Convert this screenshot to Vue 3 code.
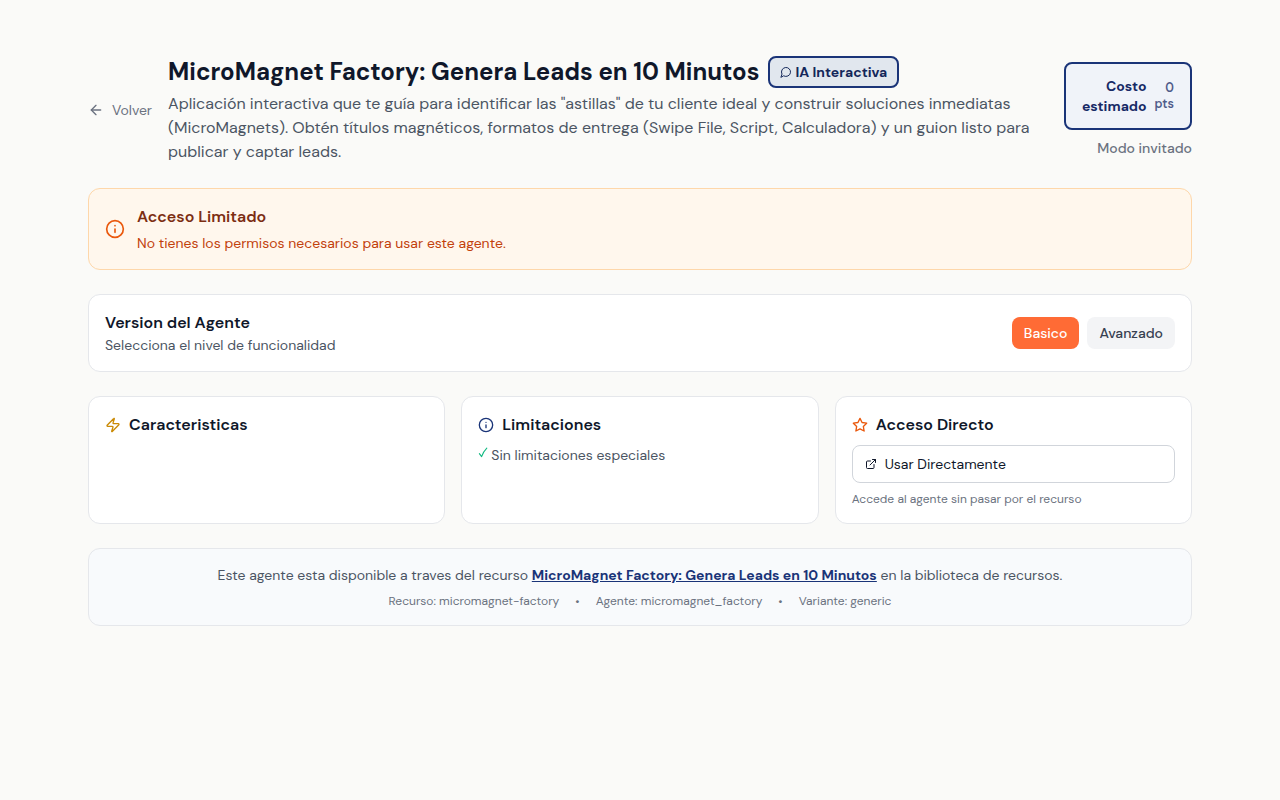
<template>
  <div class="agent-page">
    <div class="container">
      <header class="header">
        <button class="back-btn">
          <svg class="icon-16" viewBox="0 0 24 24">
            <path d="m12 19-7-7 7-7"/>
            <path d="M19 12H5"/>
          </svg>
          <span>Volver</span>
        </button>

        <div class="header-main">
          <div class="title-row">
            <h1>{{ agent.name }}</h1>
            <span class="badge">
              <svg class="icon-12" viewBox="0 0 24 24">
                <path d="M7.9 20A9 9 0 1 0 4 16.1L2 22Z"/>
              </svg>
              IA Interactiva
            </span>
          </div>
          <p class="description">{{ agent.description }}</p>
        </div>

        <div class="header-side">
          <div class="cost-box">
            <span class="cost-label">Costo<br>estimado</span>
            <span class="cost-value">{{ agent.cost }}<br>pts</span>
          </div>
          <span class="guest">Modo invitado</span>
        </div>
      </header>

      <section class="alert">
        <svg class="icon-20" viewBox="0 0 24 24">
          <circle cx="12" cy="12" r="10"/>
          <path d="M12 16v-4"/>
          <path d="M12 8h.01"/>
        </svg>
        <div>
          <h3>Acceso Limitado</h3>
          <p>No tienes los permisos necesarios para usar este agente.</p>
        </div>
      </section>

      <section class="card version">
        <div>
          <h3>Version del Agente</h3>
          <p>Selecciona el nivel de funcionalidad</p>
        </div>
        <div class="version-options">
          <button
            v-for="v in versions"
            :key="v.id"
            class="version-btn"
            :class="{ active: selected === v.id }"
            @click="selected = v.id"
          >{{ v.label }}</button>
        </div>
      </section>

      <div class="grid">
        <section class="card">
          <div class="card-title features">
            <svg class="icon-16" viewBox="0 0 24 24">
              <path d="M4 14a1 1 0 0 1-.78-1.63l9.9-10.2a.5.5 0 0 1 .86.46l-1.92 6.02A1 1 0 0 0 13 10h7a1 1 0 0 1 .78 1.63l-9.9 10.2a.5.5 0 0 1-.86-.46l1.92-6.02A1 1 0 0 0 11 14z"/>
            </svg>
            <h3>Caracteristicas</h3>
          </div>
        </section>

        <section class="card">
          <div class="card-title limits">
            <svg class="icon-16" viewBox="0 0 24 24">
              <circle cx="12" cy="12" r="10"/>
              <path d="M12 16v-4"/>
              <path d="M12 8h.01"/>
            </svg>
            <h3>Limitaciones</h3>
          </div>
          <div class="limit-item">
            <svg class="check" viewBox="0 0 10 12">
              <path d="M1.4 6.6 3.6 9.6C4.8 6.4 6.4 3.6 8.8 1.2"/>
            </svg>
            <span>Sin limitaciones especiales</span>
          </div>
        </section>

        <section class="card">
          <div class="card-title direct">
            <svg class="icon-16" viewBox="0 0 24 24">
              <path d="M12 2l3.09 6.26L22 9.27l-5 4.87 1.18 6.88L12 17.77l-6.18 3.25L7 14.14 2 9.27l6.91-1.01L12 2z"/>
            </svg>
            <h3>Acceso Directo</h3>
          </div>
          <button class="direct-btn">
            <svg class="icon-12" viewBox="0 0 24 24">
              <path d="M15 3h6v6"/>
              <path d="M10 14 21 3"/>
              <path d="M18 13v6a2 2 0 0 1-2 2H5a2 2 0 0 1-2-2V8a2 2 0 0 1 2-2h6"/>
            </svg>
            <span>Usar Directamente</span>
          </button>
          <p class="hint">Accede al agente sin pasar por el recurso</p>
        </section>
      </div>

      <footer class="resource">
        <p>
          Este agente esta disponible a traves del recurso
          <a>{{ agent.name }}</a>
          en la biblioteca de recursos.
        </p>
        <div class="meta">
          <span>Recurso: {{ agent.resource }}</span>
          <span>•</span>
          <span>Agente: {{ agent.id }}</span>
          <span>•</span>
          <span>Variante: {{ agent.variant }}</span>
        </div>
      </footer>
    </div>
  </div>
</template>

<script setup>
import { ref } from 'vue'

const agent = {
  id: 'micromagnet_factory',
  name: 'MicroMagnet Factory: Genera Leads en 10 Minutos',
  description: 'Aplicación interactiva que te guía para identificar las "astillas" de tu cliente ideal y construir soluciones inmediatas (MicroMagnets). Obtén títulos magnéticos, formatos de entrega (Swipe File, Script, Calculadora) y un guion listo para publicar y captar leads.',
  resource: 'micromagnet-factory',
  variant: 'generic',
  cost: 0
}

const versions = [
  { id: 'basic', label: 'Basico' },
  { id: 'advanced', label: 'Avanzado' }
]

const selected = ref('basic')
</script>

<style>
body {
  margin: 0;
  background: #fafaf8;
}
</style>

<style scoped>
.agent-page {
  min-height: 100vh;
  box-sizing: border-box;
  padding: 56px 24px;
  background: #fafaf8;
  color: #0f172a;
  font-family: "DM Sans", Inter, "Open Sans", sans-serif;
  font-size: 14px;
  line-height: 20px;
}

.container {
  max-width: 1104px;
  margin: 0 auto;
  display: flex;
  flex-direction: column;
  gap: 24px;
}

h1,
h3,
p {
  margin: 0;
}

button {
  font: inherit;
  color: inherit;
  border: none;
  background: none;
  padding: 0;
  cursor: pointer;
}

svg {
  flex-shrink: 0;
  fill: none;
  stroke: currentColor;
  stroke-width: 2;
  stroke-linecap: round;
  stroke-linejoin: round;
}

.icon-12 {
  width: 12px;
  height: 12px;
}

.icon-16 {
  width: 16px;
  height: 16px;
}

.icon-20 {
  width: 20px;
  height: 20px;
}

h3 {
  font-size: 16px;
  line-height: 24px;
  font-weight: 600;
}

.header {
  display: flex;
  align-items: center;
  gap: 16px;
}

.back-btn {
  display: flex;
  align-items: center;
  gap: 8px;
  color: #6b7280;
}

.header-main {
  flex: 1;
  min-width: 0;
}

.title-row {
  display: flex;
  align-items: center;
  gap: 8px;
  margin-bottom: 4px;
}

h1 {
  font-size: 24px;
  line-height: 32px;
  font-weight: 700;
}

.badge {
  display: flex;
  align-items: center;
  gap: 4px;
  padding: 4px 10px;
  border: 2px solid #1a3478;
  border-radius: 8px;
  background: #e1e7ee;
  color: #14275a;
  font-weight: 700;
}

.description {
  color: #4b5563;
  font-size: 16px;
  line-height: 24px;
}

.header-side {
  display: flex;
  flex-direction: column;
  align-items: flex-end;
  gap: 8px;
}

.cost-box {
  display: flex;
  align-items: center;
  gap: 8px;
  padding: 12px 16px;
  border: 2px solid #1a3478;
  border-radius: 8px;
  background: #f0f3f9;
  color: #172a66;
  text-align: right;
}

.cost-label {
  font-weight: 700;
}

.cost-value {
  font-size: 12.4px;
  line-height: 16px;
  font-weight: 600;
  opacity: 0.75;
}

.guest {
  color: #6b7280;
  font-weight: 500;
}

.alert {
  display: flex;
  align-items: center;
  gap: 12px;
  padding: 16px;
  border: 1px solid #fed7aa;
  border-radius: 12px;
  background: #fff7ed;
  color: #ea580c;
}

.alert h3 {
  margin-bottom: 4px;
  color: #7c2d12;
}

.alert p {
  color: #c2410c;
}

.card {
  padding: 16px;
  border: 1px solid #e5e7eb;
  border-radius: 12px;
  background: #fff;
}

.version {
  display: flex;
  align-items: center;
  justify-content: space-between;
}

.version p {
  color: #4b5563;
}

.version-options {
  display: flex;
  gap: 8px;
}

.version-btn {
  padding: 6px 12px;
  border-radius: 8px;
  background: #f3f4f6;
  color: #374151;
  font-weight: 500;
}

.version-btn.active {
  background: #ff6b35;
  color: #fff;
}

.grid {
  display: grid;
  grid-template-columns: repeat(3, minmax(0, 1fr));
  gap: 16px;
}

.card-title {
  display: flex;
  align-items: center;
  gap: 8px;
  margin-bottom: 8px;
}

.card-title h3 {
  color: #0f172a;
}

.features {
  color: #ca8a04;
}

.limits {
  color: #1a3478;
}

.direct {
  color: #ea580c;
}

.limit-item {
  display: flex;
  align-items: center;
  gap: 3px;
  color: #4b5563;
}

.check {
  width: 10px;
  height: 12px;
  margin-bottom: 4px;
  color: #10b981;
  stroke-width: 1.1;
}

.direct-btn {
  display: flex;
  align-items: center;
  gap: 8px;
  width: 100%;
  padding: 8px 12px;
  border: 1px solid #d1d5db;
  border-radius: 8px;
}

.hint {
  margin-top: 8px;
  color: #6b7280;
  font-size: 12px;
  line-height: 16px;
}

.resource {
  padding: 16px;
  border: 1px solid #e5e7eb;
  border-radius: 12px;
  background: #f8fafc;
  color: #4b5563;
  text-align: center;
}

.resource a {
  color: #1a3478;
  font-weight: 700;
  text-decoration: underline;
}

.meta {
  display: flex;
  justify-content: center;
  gap: 16px;
  margin-top: 8px;
  color: #6b7280;
  font-size: 12px;
  line-height: 16px;
}
</style>
